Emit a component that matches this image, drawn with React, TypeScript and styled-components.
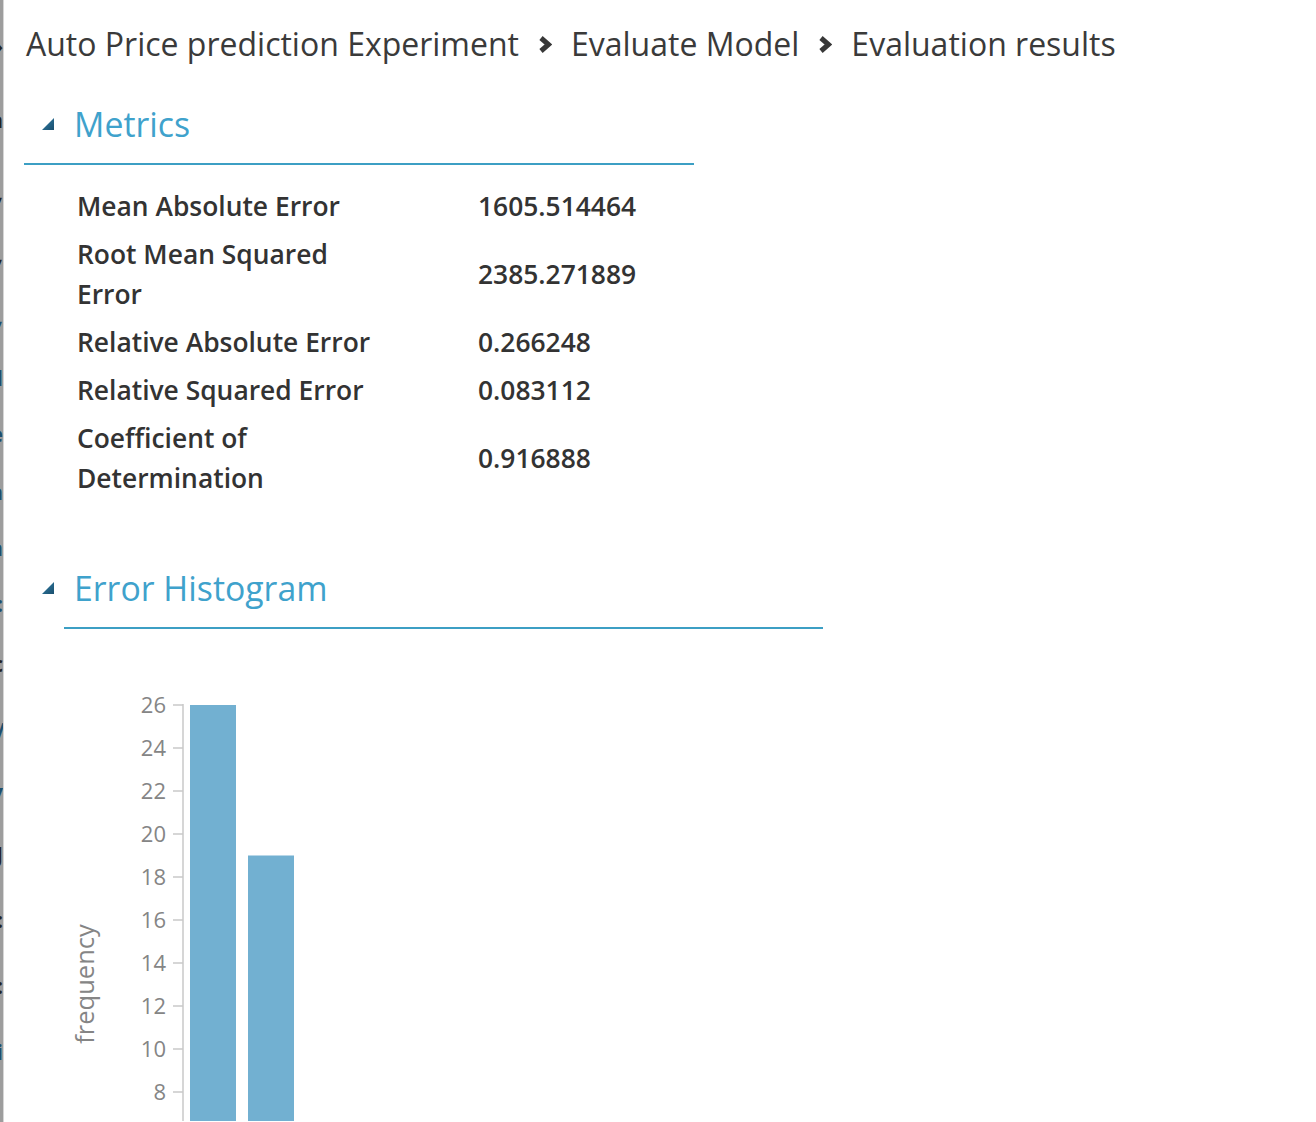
import React from "react";
import styled, { createGlobalStyle } from "styled-components";

const GlobalStyle = createGlobalStyle`
  html, body { margin: 0; padding: 0; background: #ffffff; }
  body { font-family: "Open Sans", "Noto Sans", "DejaVu Sans", sans-serif; color: #333333; }
`;

const Page = styled.div`
  display: flex;
  height: 1122px;
  overflow: hidden;
  background: #ffffff;
`;

const Strip = styled.div`
  width: 4px;
  flex: 0 0 4px;
  background: #9d9d9d;
  border-right: 1px solid #d6d6d6;
  box-sizing: border-box;
  overflow: hidden;
  display: flex;
  flex-direction: column;
`;

const StripGlyph = styled.span<{ $top: number; $color?: string }>`
  display: block;
  margin-top: ${(p) => p.$top}px;
  margin-left: -12px;
  width: 15px;
  text-align: right;
  font-size: 22px;
  line-height: 22px;
  font-weight: 700;
  color: ${(p) => p.$color ?? "#222"};
`;

const Content = styled.main`
  flex: 1;
  padding-left: 20px;
`;

const Breadcrumb = styled.nav`
  display: flex;
  align-items: center;
  gap: 19px;
  padding: 22px 0 0 2px;
  font-size: 32px;
  line-height: 44px;
  color: #3a3a3a;
  white-space: nowrap;
`;

const Crumb = styled.span``;

const Chevron = () => (
  <svg width="14" height="19" viewBox="0 0 14 19" aria-hidden>
    <polyline points="3,3 10.5,9.5 3,16" fill="none" stroke="#383838" strokeWidth="5" strokeLinejoin="miter" />
  </svg>
);

const SectionHeader = styled.div<{ $mt: number }>`
  display: flex;
  align-items: center;
  gap: 20px;
  margin-top: ${(p) => p.$mt}px;
  padding-left: 18px;
  height: 44px;
`;

const Title = styled.h2`
  margin: 0;
  font-size: 33.8px;
  font-weight: 400;
  line-height: 44px;
  color: #3fa2cc;
`;

const Collapse = () => (
  <svg width="12" height="12" viewBox="0 0 12 12" aria-hidden>
    <defs>
      <linearGradient id="tri" x1="0" y1="0" x2="1" y2="1">
        <stop offset="0" stopColor="#2f7ea6" />
        <stop offset="1" stopColor="#1b4f6e" />
      </linearGradient>
    </defs>
    <polygon points="12,0 12,12 0,12" fill="url(#tri)" />
  </svg>
);

const Rule = styled.div<{ $inset: number; $width: number }>`
  margin-top: 17px;
  margin-left: ${(p) => p.$inset}px;
  width: ${(p) => p.$width}px;
  height: 2px;
  background: #3c9fc4;
`;

const MetricsTable = styled.div`
  display: grid;
  grid-template-columns: 401px auto;
  margin-top: 17px;
  padding-left: 53px;
  font-size: 26.4px;
  font-weight: 600;
  line-height: 40px;
  color: #333333;
`;

const Label = styled.div`
  padding: 4px 0;
  max-width: 314px;
`;

const Value = styled.div`
  display: flex;
  align-items: center;
  padding: 4px 0;
`;

const ChartWrap = styled.div`
  margin-left: 40px;
`;

const metrics: [string, string][] = [
  ["Mean Absolute Error", "1605.514464"],
  ["Root Mean Squared Error", "2385.271889"],
  ["Relative Absolute Error", "0.266248"],
  ["Relative Squared Error", "0.083112"],
  ["Coefficient of Determination", "0.916888"],
];

const Histogram = () => {
  const h = 492;
  const top = 76;
  const per = 21.5;
  const y = (v: number) => top + (26 - v) * per;
  const ticks = [26, 24, 22, 20, 18, 16, 14, 12, 10, 8];
  const bars = [
    { x: 126, v: 26 },
    { x: 184, v: 19 },
  ];
  return (
    <svg width="760" height={h} viewBox={`0 0 760 ${h}`}>
      <line x1="119" y1={top - 1} x2="119" y2={h} stroke="#c8c8c8" strokeWidth="1.5" />
      {ticks.map((t) => (
        <g key={t}>
          <line x1="109" x2="119" y1={y(t)} y2={y(t)} stroke="#c8c8c8" strokeWidth="1.5" />
          <text
            x="102"
            y={y(t) + 8}
            textAnchor="end"
            fontSize="22"
            fill="#858585"
            fontFamily="Open Sans, Noto Sans, sans-serif"
          >
            {t}
          </text>
        </g>
      ))}
      {bars.map((b) => (
        <rect key={b.x} x={b.x} y={y(b.v)} width="46" height={h - y(b.v)} fill="#72b0d1" />
      ))}
      <text
        x="0"
        y="0"
        transform="translate(30 355) rotate(-90)"
        textAnchor="middle"
        fontSize="25.5"
        fill="#858585"
        fontFamily="Open Sans, Noto Sans, sans-serif"
      >
        frequency
      </text>
    </svg>
  );
};

const stripGlyphs: { top: number; ch: string; color?: string }[] = [
  { top: 34, ch: "›" },
  { top: 52, ch: "a" },
  { top: 50, ch: "," },
  { top: 40, ch: "," },
  { top: 40, ch: ",", color: "#1d4f6e" },
  { top: 40, ch: "l", color: "#1d4f6e" },
  { top: 34, ch: "e", color: "#1d4f6e" },
  { top: 36, ch: "a", color: "#1d4f6e" },
  { top: 34, ch: "n", color: "#1d4f6e" },
  { top: 34, ch: ":", color: "#1d4f6e" },
  { top: 38, ch: "c" },
  { top: 44, ch: "M", color: "#1d4f6e" },
  { top: 40, ch: "y", color: "#1d4f6e" },
  { top: 40, ch: "J" },
  { top: 44, ch: ":" },
  { top: 44, ch: ":" },
  { top: 44, ch: "i", color: "#1d4f6e" },
];

export default function App() {
  return (
    <>
      <GlobalStyle />
      <Page>
        <Strip>
          {stripGlyphs.map((g, i) => (
            <StripGlyph key={i} $top={g.top} $color={g.color}>
              {g.ch}
            </StripGlyph>
          ))}
        </Strip>
        <Content>
          <Breadcrumb>
            <Crumb>Auto Price prediction Experiment</Crumb>
            <Chevron />
            <Crumb>Evaluate Model</Crumb>
            <Chevron />
            <Crumb>Evaluation results</Crumb>
          </Breadcrumb>

          <SectionHeader $mt={36}>
            <Collapse />
            <Title>Metrics</Title>
          </SectionHeader>
          <Rule $inset={0} $width={670} />
          <MetricsTable>
            {metrics.map(([k, v]) => (
              <React.Fragment key={k}>
                <Label>{k}</Label>
                <Value>{v}</Value>
              </React.Fragment>
            ))}
          </MetricsTable>

          <SectionHeader $mt={64}>
            <Collapse />
            <Title>Error Histogram</Title>
          </SectionHeader>
          <Rule $inset={40} $width={759} />
          <ChartWrap>
            <Histogram />
          </ChartWrap>
        </Content>
      </Page>
    </>
  );
}
